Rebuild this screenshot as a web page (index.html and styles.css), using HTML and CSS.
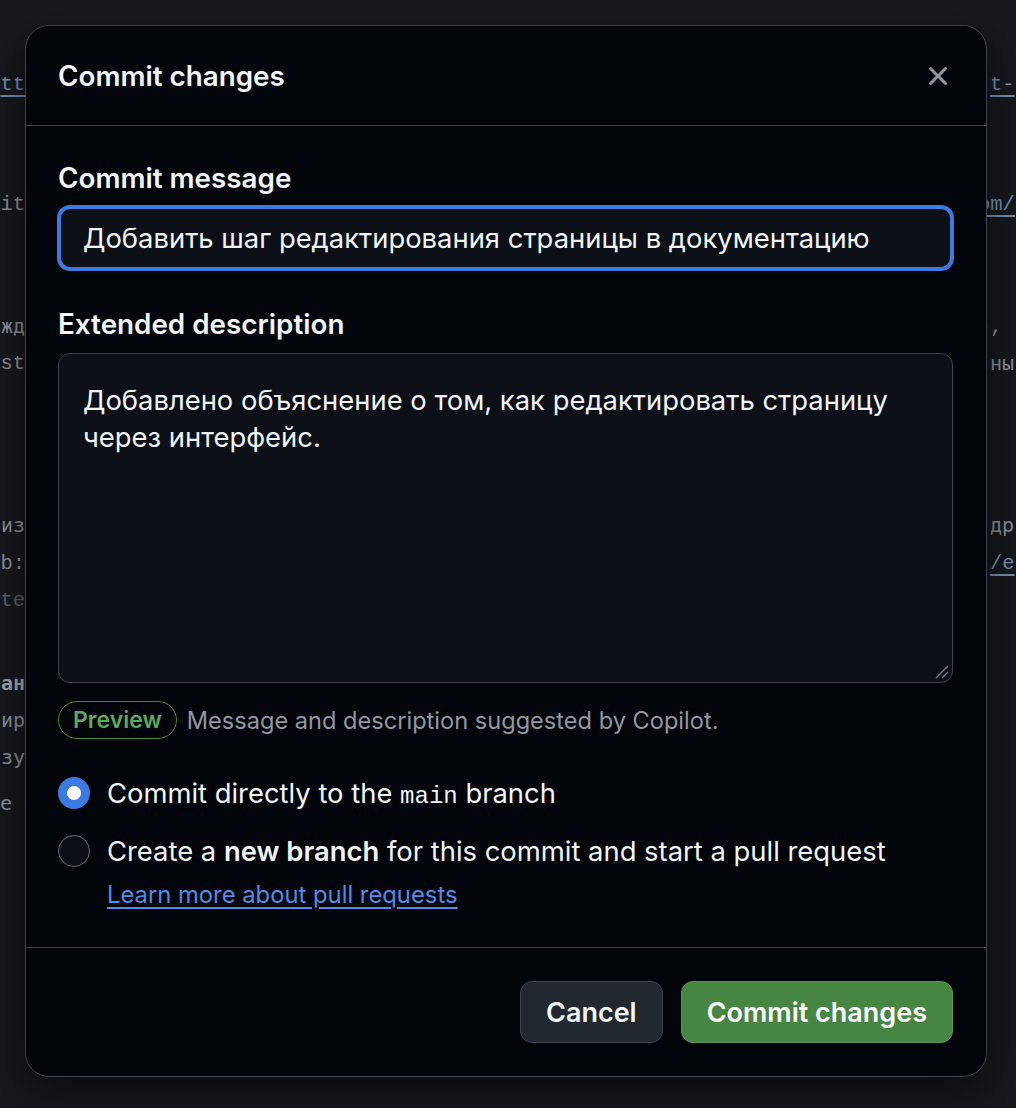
FILE: index.html
```html
<!DOCTYPE html>
<html lang="ru">
<head>
<meta charset="utf-8">
<title>Commit changes</title>
<link rel="stylesheet" href="styles.css">
</head>
<body>
<div class="page">
  <div class="code">
    <div class="line l1"><span class="left"><span class="link">tt</span></span><span class="mid"></span><span class="right"><span class="link">t-</span></span></div>
    <div class="line l2"><span class="left">it</span><span class="mid"></span><span class="right partial"><span class="link">om/</span></span></div>
    <div class="line l3"><span class="left cy">жд</span><span class="mid"></span><span class="right partial">),</span></div>
    <div class="line l4"><span class="left">st</span><span class="mid"></span><span class="right cy">ны</span></div>
    <div class="line l5"><span class="left cy">из</span><span class="mid"></span><span class="right cy">др</span></div>
    <div class="line l6"><span class="left">b:</span><span class="mid"></span><span class="right"><span class="link">/е</span></span></div>
    <div class="line l7"><span class="left dim">te</span><span class="mid"></span><span class="right"></span></div>
    <div class="line l8"><span class="left cy strong">ан</span><span class="mid"></span><span class="right"></span></div>
    <div class="line l9"><span class="left cy">ир</span><span class="mid"></span><span class="right"></span></div>
    <div class="line l10"><span class="left cy">зу</span><span class="mid"></span><span class="right"></span></div>
    <div class="line l11"><span class="left cy start">е</span><span class="mid"></span><span class="right"></span></div>
  </div>

  <div class="dialog" role="dialog" aria-labelledby="dlg-title">
    <div class="dialog-header">
      <h1 class="title" id="dlg-title">Commit changes</h1>
      <span class="close" aria-label="Close">
        <svg width="32" height="32" viewBox="0 0 16 16" fill="currentColor" aria-hidden="true"><path d="M3.72 3.72a.75.75 0 0 1 1.06 0L8 6.94l3.22-3.22a.749.749 0 0 1 1.275.326.749.749 0 0 1-.215.734L9.06 8l3.22 3.22a.749.749 0 0 1-.326 1.275.749.749 0 0 1-.734-.215L8 9.06l-3.22 3.22a.751.751 0 0 1-1.042-.018.751.751 0 0 1-.018-1.042L6.94 8 3.72 4.78a.75.75 0 0 1 0-1.06Z"/></svg>
      </span>
    </div>

    <div class="dialog-body">
      <div class="label">Commit message</div>
      <div class="input" role="textbox">Добавить шаг редактирования страницы в документацию</div>

      <div class="label label-desc">Extended description</div>
      <div class="textarea" role="textbox">Добавлено объяснение о том, как редактировать страницу<br>через интерфейс.
        <svg class="grip" width="16" height="16" viewBox="0 0 16 16" aria-hidden="true"><path d="M2 14 L14 2 M8 14 L14 8" stroke="#6e7681" stroke-width="1.5" fill="none"/></svg>
      </div>

      <div class="hint">
        <span class="pill">Preview</span>
        <span class="hint-text">Message and description suggested by Copilot.</span>
      </div>

      <div class="options">
        <div class="option"><span class="radio checked"></span><span>Commit directly to the <code class="mono">main</code> branch</span></div>
        <div class="option"><span class="radio"></span><span>Create a <b>new branch</b> for this commit and start a pull request</span></div>
        <a class="learn" href="#">Learn more about pull requests</a>
      </div>
    </div>

    <div class="dialog-footer">
      <button class="btn btn-cancel" type="button">Cancel</button>
      <button class="btn btn-primary" type="button">Commit changes</button>
    </div>
  </div>
</div>
</body>
</html>
```

FILE: styles.css
```css
html, body {
  margin: 0;
  padding: 0;
}
body {
  background: #17191e;
  font-family: Inter, "Noto Sans", "DejaVu Sans", sans-serif;
  color: #f0f6fc;
}
.page {
  position: relative;
  width: 1016px;
  height: 1108px;
  overflow: hidden;
}

/* background editor text */
.code {
  padding-top: 66px;
  font-family: "Liberation Mono", "DejaVu Sans Mono", monospace;
  font-size: 20.5px;
  color: #8e939b;
}
.line {
  display: grid;
  grid-template-columns: 25px 953px 1fr;
  height: 37px;
  line-height: 37px;
  white-space: nowrap;
}
.left {
  display: flex;
  justify-content: flex-end;
  overflow: hidden;
}
.left.start {
  justify-content: flex-start;
}
.right {
  overflow: hidden;
  padding-left: 12px;
}
.right.partial {
  padding-left: 0;
}
.cy { font-family: "DejaVu Sans Mono", monospace; font-size: 20px; }
.link { color: #7590b8; text-decoration: underline; text-underline-offset: 5px; }
.dim { color: #5b6068; }
.strong { font-weight: 700; color: #a5a9af; }
.l2 { margin-top: 83px; }
.l3 { margin-top: 85px; }
.l5 { margin-top: 125px; }
.l6 { margin-top: 1px; }
.l8 { margin-top: 46px; }
.l11 { margin-top: 9px; }

/* dialog */
.dialog {
  position: absolute;
  left: 25px;
  top: 25px;
  width: 962px;
  box-sizing: border-box;
  background: #010409;
  border: 1px solid #3d444d;
  border-radius: 24px;
  box-shadow: 0 16px 48px rgba(0, 0, 0, 0.55);
}
.dialog-header {
  height: 99px;
  border-bottom: 1px solid #3d444d;
  display: flex;
  align-items: center;
  justify-content: space-between;
  padding: 0 32px 0 32px;
}
.title {
  margin: 0;
  font-size: 27.8px;
  font-weight: 600;
  line-height: 36px;
  color: #f0f6fc;
}
.close {
  display: flex;
  color: #9198a1;
}
.dialog-body {
  padding: 34px 33px 37px 32px;
}
.label {
  font-size: 27.8px;
  font-weight: 600;
  line-height: 36px;
}
.label-desc {
  margin-top: 36px;
}
.input {
  margin-top: 10px;
  height: 64px;
  box-sizing: border-box;
  border: 3px solid #3b7ae0;
  box-shadow: 0 0 0 1px #3b7ae0;
  border-radius: 12px;
  background: #0d1117;
  padding: 0 22px;
  display: flex;
  align-items: center;
  font-size: 27.4px;
  white-space: nowrap;
  overflow: hidden;
}
.textarea {
  position: relative;
  margin-top: 11px;
  height: 330px;
  box-sizing: border-box;
  border: 1px solid #3d444d;
  border-radius: 12px;
  background: #0d1117;
  padding: 28px 24px;
  font-size: 27.4px;
  line-height: 37px;
}
.grip {
  position: absolute;
  right: 2px;
  bottom: 2px;
}
.hint {
  margin-top: 18px;
  display: flex;
  align-items: center;
  gap: 10px;
}
.pill {
  height: 38px;
  box-sizing: border-box;
  border: 1.5px solid #3a8a40;
  border-radius: 19px;
  padding: 0 14px;
  color: #57ab5a;
  font-size: 23px;
  font-weight: 600;
  display: flex;
  align-items: center;
}
.hint-text {
  color: #9198a1;
  font-size: 23.6px;
}
.options {
  margin-top: 37px;
  display: flex;
  flex-direction: column;
  gap: 24px;
}
.option {
  display: flex;
  align-items: center;
  gap: 17px;
  height: 34px;
  font-size: 27.4px;
}
.option b {
  font-weight: 600;
}
.radio {
  flex: none;
  width: 32px;
  height: 32px;
  border-radius: 50%;
  box-sizing: border-box;
  border: 1.5px solid #636a73;
  background: #0d1117;
}
.radio.checked {
  border: 9px solid #3b7ae0;
  background: #ffffff;
}
.mono {
  font-family: "Liberation Mono", "DejaVu Sans Mono", monospace;
  font-size: 24px;
}
.learn {
  margin-top: -12px;
  padding-left: 49px;
  font-size: 23.8px;
  line-height: 30px;
  color: #4c8eea;
  text-decoration: underline;
  text-underline-offset: 4px;
}
.dialog-footer {
  border-top: 1px solid #3d444d;
  padding: 33px 33px;
  display: flex;
  justify-content: flex-end;
  gap: 18px;
}
.btn {
  height: 62px;
  box-sizing: border-box;
  border-radius: 12px;
  padding: 0 25px;
  font-family: inherit;
  font-size: 27px;
  font-weight: 600;
  display: flex;
  align-items: center;
}
.btn-cancel {
  background: #212830;
  border: 1.5px solid #3d444d;
  color: #f0f6fc;
}
.btn-primary {
  background: #478542;
  border: 1.5px solid #5b9653;
  color: #ffffff;
}
```
